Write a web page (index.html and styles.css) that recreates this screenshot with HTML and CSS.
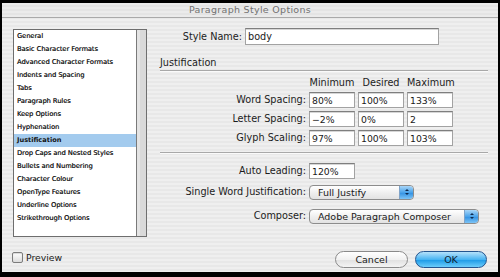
FILE: index.html
```html
<!DOCTYPE html>
<html lang="en">
<head>
    <meta charset="UTF-8">
    <title>Paragraph Style Options</title>
    <link rel="stylesheet" href="styles.css">
</head>
<body>
    <div class="window">
        <div class="titlebar">Paragraph Style Options</div>

        <div class="content">
            <div class="sidebar">
                <div class="list">
                    <ul class="items">
                        <li>General</li>
                        <li>Basic Character Formats</li>
                        <li>Advanced Character Formats</li>
                        <li>Indents and Spacing</li>
                        <li>Tabs</li>
                        <li>Paragraph Rules</li>
                        <li>Keep Options</li>
                        <li>Hyphenation</li>
                        <li class="selected">Justification</li>
                        <li>Drop Caps and Nested Styles</li>
                        <li>Bullets and Numbering</li>
                        <li>Character Colour</li>
                        <li>OpenType Features</li>
                        <li>Underline Options</li>
                        <li>Strikethrough Options</li>
                    </ul>
                    <div class="scrolltrack"></div>
                </div>
                <label class="preview"><span class="checkbox"></span>Preview</label>
            </div>

            <div class="main">
                <div class="name-row">
                    <span class="name-label">Style Name:</span>
                    <div class="field name-field">body</div>
                </div>

                <div class="section-title">Justification</div>

                <div class="spacing-grid">
                    <span></span>
                    <span class="col-head">Minimum</span>
                    <span class="col-head">Desired</span>
                    <span class="col-head">Maximum</span>

                    <span class="label">Word Spacing:</span>
                    <div class="field">80%</div>
                    <div class="field">100%</div>
                    <div class="field">133%</div>

                    <span class="label">Letter Spacing:</span>
                    <div class="field">&minus;2%</div>
                    <div class="field">0%</div>
                    <div class="field">2</div>

                    <span class="label">Glyph Scaling:</span>
                    <div class="field">97%</div>
                    <div class="field">100%</div>
                    <div class="field">103%</div>
                </div>

                <div class="divider"></div>

                <div class="row leading-row">
                    <span class="label">Auto Leading:</span>
                    <div class="field small-field">120%</div>
                </div>

                <div class="row single-row">
                    <span class="label">Single Word Justification:</span>
                    <div class="popup justify-popup">
                        <span>Full Justify</span>
                        <span class="stepper"><i class="up"></i><i class="down"></i></span>
                    </div>
                </div>

                <div class="row composer-row">
                    <span class="label">Composer:</span>
                    <div class="popup composer-popup">
                        <span>Adobe Paragraph Composer</span>
                        <span class="stepper"><i class="up"></i><i class="down"></i></span>
                    </div>
                </div>

                <div class="buttons">
                    <button class="btn cancel">Cancel</button>
                    <button class="btn ok">OK</button>
                </div>
            </div>
        </div>
    </div>
</body>
</html>
```

FILE: styles.css
```css
* {
    margin: 0;
    padding: 0;
    box-sizing: border-box;
}

body {
    background: #000;
    width: 500px;
    height: 277px;
    overflow: hidden;
    font-family: 'DejaVu Sans', sans-serif;
    color: #1c1c1c;
}

.window {
    margin: 3px 2px 0 2px;
    height: 269px;
    background: repeating-linear-gradient(#efefef 0 2px, #e8e8e8 2px 4px);
    display: flex;
    flex-direction: column;
}

.titlebar {
    height: 15px;
    line-height: 13px;
    text-align: center;
    font-size: 9.5px;
    color: #727272;
    letter-spacing: 0.3px;
    background: repeating-linear-gradient(#ebebeb 0 2px, #e4e4e4 2px 4px);
    border-bottom: 1px solid #a9a9a9;
}

.content {
    flex: 1;
    display: flex;
}

/* left column */
.sidebar {
    width: 158px;
    padding: 11px 0 0 11px;
    display: flex;
    flex-direction: column;
}

.list {
    width: 134px;
    height: 208px;
    border: 1px solid #6e6e6e;
    background: #fff;
    display: flex;
}

.items {
    list-style: none;
    flex: 1;
    border-right: 1px solid #7a7a7a;
}

.items li {
    height: 13px;
    line-height: 13px;
    padding-left: 3px;
    font-size: 6.6px;
    color: #1a1a1a;
    text-shadow: 0.25px 0 0 #444;
    white-space: nowrap;
}

.items li.selected {
    background: #a3cbee;
    font-weight: bold;
    text-shadow: none;
    color: #141414;
}

.scrolltrack {
    width: 9px;
    background: repeating-linear-gradient(90deg, #e4e4e4 0 3px, #d9d9d9 3px 9px);
}

.preview {
    margin-top: 15px;
    margin-left: -1px;
    display: flex;
    align-items: center;
    gap: 3px;
    font-size: 9.3px;
    color: #202020;
}

.checkbox {
    width: 11px;
    height: 11px;
    border: 1px solid #7c7c7c;
    border-radius: 2px;
    background: linear-gradient(#ffffff, #dcdcdc);
    box-shadow: inset 0 1px 1px rgba(0, 0, 0, 0.15);
}

/* right column */
.main {
    width: 328px;
    padding-top: 10px;
    display: flex;
    flex-direction: column;
    font-size: 9.7px;
}

.field {
    height: 16px;
    line-height: 15px;
    padding-left: 2px;
    background: #fff;
    border: 1px solid #a2a2a2;
    border-top-color: #7e7e7e;
    box-shadow: inset 0 1px 0 #d6d6d6;
    font-size: 9.3px;
    color: #1a1a1a;
}

.name-row {
    display: flex;
    align-items: center;
    gap: 3px;
}

.name-label {
    width: 82px;
    text-align: right;
}

.name-field {
    width: 194px;
    height: 17px;
    line-height: 16px;
    font-size: 9.7px;
}

.section-title {
    margin-top: 11px;
    height: 15px;
    line-height: 13px;
    font-size: 9.7px;
    border-bottom: 1px solid #a8a8a8;
    box-shadow: 0 1px 0 #fafafa;
}

.spacing-grid {
    margin-top: 4px;
    display: grid;
    grid-template-columns: 146px 46px 46px 46px;
    grid-template-rows: 14px repeat(3, 16px);
    column-gap: 3px;
    row-gap: 3px;
}

.col-head {
    text-align: center;
    align-self: end;
    line-height: 12px;
    white-space: nowrap;
}

.label {
    text-align: right;
    line-height: 16px;
    white-space: nowrap;
}

.divider {
    margin-top: 6px;
    height: 1px;
    background: #a8a8a8;
    box-shadow: 0 1px 0 #fafafa;
}

.row {
    display: grid;
    grid-template-columns: 146px auto;
    column-gap: 3px;
    justify-content: start;
    align-items: center;
}

.leading-row {
    margin-top: 10px;
}

.small-field {
    width: 46px;
}

.single-row {
    margin-top: 5px;
}

.composer-row {
    margin-top: 8px;
}

.popup {
    height: 15px;
    display: flex;
    align-items: center;
    justify-content: space-between;
    padding: 0 0 0 8px;
    border: 1px solid #8c8c8c;
    border-radius: 4px;
    background: linear-gradient(#ffffff, #eeeeee 55%, #e2e2e2);
    font-size: 9.5px;
    color: #1a1a1a;
    white-space: nowrap;
    overflow: hidden;
}

.justify-popup {
    width: 105px;
}

.composer-popup {
    width: 170px;
}

.stepper {
    width: 14px;
    height: 100%;
    border-left: 1px solid #7fa3c8;
    border-radius: 0 3px 3px 0;
    background: linear-gradient(#a9d6f8, #4aa3ea 50%, #2f8fe2 51%, #7cc4f6);
    display: flex;
    flex-direction: column;
    align-items: center;
    justify-content: center;
    gap: 2px;
}

.stepper i {
    width: 0;
    height: 0;
    border-left: 2px solid transparent;
    border-right: 2px solid transparent;
}

.stepper .up {
    border-bottom: 2px solid #0f2a4f;
}

.stepper .down {
    border-top: 2px solid #0f2a4f;
}

.buttons {
    margin-top: 27px;
    display: flex;
    justify-content: flex-end;
    gap: 7px;
    padding-right: 1px;
}

.btn {
    width: 73px;
    height: 17px;
    border-radius: 9px;
    font-family: 'DejaVu Sans', sans-serif;
    font-size: 9.5px;
    color: #1a1a1a;
    line-height: 15px;
}

.cancel {
    border: 1px solid #8a8a8a;
    background: linear-gradient(#ffffff, #f1f1f1 50%, #e0e0e0 51%, #f4f4f4);
}

.ok {
    width: 72px;
    border: 1px solid #24558f;
    color: #0f1f33;
    background: linear-gradient(#b6e2fb, #48b4f2 50%, #1a98e6 51%, #6ccdfb);
}
```
